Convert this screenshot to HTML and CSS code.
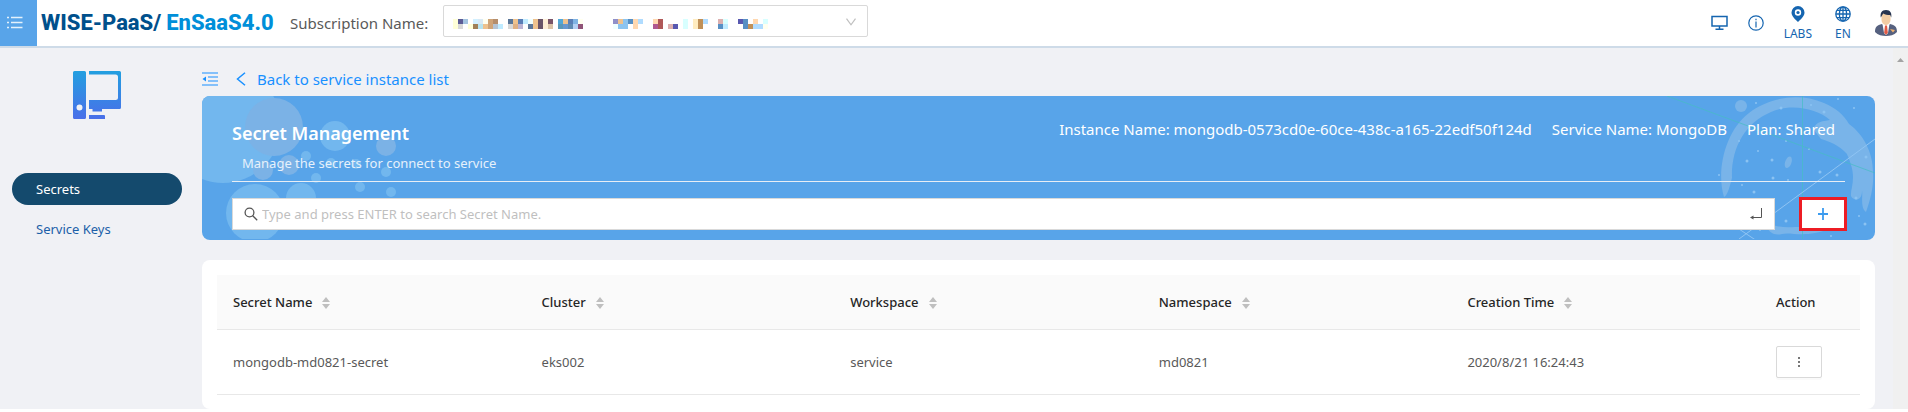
FILE: index.html
```html
<!DOCTYPE html>
<html lang="en">
<head>
<meta charset="utf-8">
<title>Secret Management</title>
<link rel="stylesheet" href="styles.css">
</head>
<body>
<header class="topbar">
  <button class="menu-toggle" type="button" aria-label="Menu">
    <svg width="16" height="14" viewBox="0 0 16 14" fill="none" stroke="#e4f1fc" stroke-width="1.3"><path d="M4 1.5h11.500M4 6.500h11.500M4 11.500h11.500M0 1.500h2M0 6.500h2M0 11.500h2"/></svg>
  </button>
  <div class="brand"><span class="brand-main">WISE-PaaS/</span><span class="brand-sub">EnSaaS4.0</span></div>
  <label class="sub-label" for="subscription">Subscription Name:</label>
  <div class="sub-field">
    <select id="subscription" class="sub-select"><option></option></select>
    <svg class="sub-mosaic" width="315" height="10" viewBox="0 0 63 2" shape-rendering="crispEdges">
      <path fill="#ffffd8" d="M0 0h1v2h-1zM3 1h1v1h-1z"/><path fill="#fffff0" d="M6 0h1v1h-1zM25 0h1v1h-1zM62 1h1v1h-1z"/>
      <path fill="#5b5b95" d="M1 0h1v1h-1z"/><path fill="#a4c4e0" d="M2 0h1v1h-1z"/><path fill="#d2f0ff" d="M4 0h1v1h-1z"/><path fill="#d9e9f5" d="M5 0h1v1h-1z"/>
      <path fill="#cfa478" d="M7 0h1v2h-1z"/><path fill="#b58e6c" d="M8 0h1v1h-1z"/><path fill="#d8d8d8" d="M1 1h1v1h-1zM11 1h1v1h-1z"/>
      <path fill="#a08058" d="M4 1h1v1h-1z"/><path fill="#b8e4f0" d="M5 1h1v1h-1z"/><path fill="#b4c4d4" d="M8 1h1v1h-1z"/>
      <path fill="#c0ebff" d="M9 1h1v1h-1zM14 0h1v1h-1zM54 1h1v1h-1z"/>
      <path fill="#eec28e" d="M6 1h1v1h-1zM12 0h1v1h-1zM16 0h1v2h-1zM22 0h1v1h-1zM33 0h1v1h-1z"/>
      <path fill="#5a7699" d="M11 0h1v1h-1zM15 1h1v1h-1z"/><path fill="#5a7eb6" d="M13 0h1v1h-1zM23 0h1v1h-1z"/>
      <path fill="#dfb083" d="M12 1h1v1h-1z"/><path fill="#bcb4d4" d="M13 1h1v1h-1z"/><path fill="#f0ffff" d="M15 0h1v1h-1zM32 1h1v1h-1z"/>
      <path fill="#6a5468" d="M17 0h1v2h-1z"/><path fill="#7a5468" d="M19 0h1v1h-1z"/><path fill="#ffeed6" d="M18 0h1v2h-1z"/><path fill="#dcc4a8" d="M19 1h1v1h-1z"/>
      <path fill="#52a8d8" d="M21 0h1v1h-1z"/><path fill="#5a98b8" d="M21 1h1v1h-1z"/><path fill="#6898d0" d="M22 1h2v1h-2z"/><path fill="#80b4e4" d="M24 0h1v1h-1z"/><path fill="#5f8bb3" d="M23 1h1v1h-1z"/><path fill="#b4d0f4" d="M24 1h1v1h-1z"/><path fill="#905478" d="M25 1h1v1h-1z"/>
      <path fill="#9090c8" d="M32 0h1v1h-1z"/><path fill="#8cc4f0" d="M34 0h1v2h-2v-1h1z"/><path fill="#5890c4" d="M35 0h1v1h-1zM53 1h1v1h-1zM58 0h1v2h-1z"/>
      <path fill="#ffd8b0" d="M36 0h1v2h-1zM40 0h1v1h-1zM60 0h1v1h-1z"/><path fill="#b0dcff" d="M37 0h1v1h-1zM50 0h1v1h-1zM60 1h2v1h-2z"/>
      <path fill="#b05858" d="M41 0h1v2h-1z"/><path fill="#b05890" d="M40 1h1v1h-1z"/><path fill="#dcb0b0" d="M43 1h1v1h-1zM53 0h1v1h-1z"/><path fill="#5858b0" d="M44 1h1v1h-1zM57 0h1v1h-1z"/>
      <path fill="#d8ffff" d="M46 0h1v2h-1zM54 0h1v1h-1zM62 0h1v1h-1z"/><path fill="#ffecc0" d="M48 0h1v2h-1z"/><path fill="#c09058" d="M49 0h1v2h-1zM59 1h1v1h-1z"/>
    </svg>
    <svg class="sub-arrow" width="10" height="8" viewBox="0 0 10 8" fill="none" stroke="#bfbfbf" stroke-width="1.200"><path d="M.5 .7L5 6.800L9.500 .7"/></svg>
  </div>
  <nav class="tools" aria-label="Tools">
    <button type="button" class="tool" aria-label="Console"><svg width="17" height="16" viewBox="0 0 17 16" fill="none" stroke="#1565b0" stroke-width="1.500"><path d="M1 1.500h15v9.500h-15zM8.500 11v3M4.500 14.200h8"/></svg></button>
    <button type="button" class="tool" aria-label="Information"><svg width="16" height="16" viewBox="0 0 16 16" fill="none" stroke="#1565b0" stroke-width="1.200"><circle cx="8" cy="8" r="7.200"/><path d="M8 6.500v6M8 3.700v1.500"/></svg></button>
    <button type="button" class="tool tool-text"><svg width="16" height="16" viewBox="0 0 16 16"><path fill="#1565b0" fill-rule="evenodd" d="M8 0a6.500 6.500 0 0 1 6.500 6.500c0 4-4 7-6.500 9.500C5.500 13.500 1.500 10.500 1.500 6.500A6.500 6.500 0 0 1 8 0zM8 3.300a3.200 3.200 0 1 0 0 6.400a3.200 3.200 0 0 0 0-6.400z"/><circle cx="8" cy="6.500" r="1.600" fill="#1565b0"/></svg><span>LABS</span></button>
    <button type="button" class="tool tool-text"><svg width="16" height="16" viewBox="0 0 16 16" fill="none" stroke="#1565b0" stroke-width="1.300"><circle cx="8" cy="8" r="7.200"/><ellipse cx="8" cy="8" rx="3.600" ry="7.200"/><path d="M8 1v14M1 8h14M2 4.300h12M2 11.700h12"/></svg><span>EN</span></button>
    <button type="button" class="tool" aria-label="Account"><svg width="24" height="28" viewBox="0 0 24 28"><path fill="#56617f" d="M1 23c0-5 2-7 7-8l4 3 4-3c5 1 7 3 7 8-3 3-7 4-11 4s-8-1-11-4z"/><path fill="#fff" d="M8.500 15h7l-1.500 9-2 2-2-2z"/><path fill="#e25b45" d="M11 16.500h2l.8 7-1.800 2.500-1.800-2.500z"/><path fill="#f2cda4" d="M7.500 7c0-3 2-4.500 4.500-4.500s4.500 1.500 4.500 4.500v3.500c0 3-2 5.500-4.500 5.500s-4.500-2.500-4.500-5.500z"/><path fill="#26344f" d="M6.800 8.500c-.8-4 .7-7.500 5.200-7.500s6 3.500 5.200 7.500l-1-2.500c-3 0-5-.5-7-1.500z"/><path fill="#f2b16c" d="M16 20l5 1-2 2.500z"/></svg></button>
  </nav>
</header>

<div class="layout">
  <aside class="sidebar">
    <svg class="service-icon" width="48" height="48" viewBox="0 0 48 48">
      <defs><linearGradient id="pc" x1="0" y1="0" x2="0" y2="48" gradientUnits="userSpaceOnUse"><stop offset="0" stop-color="#229fe0"/><stop offset="1" stop-color="#4a6fe9"/></linearGradient></defs>
      <path fill="url(#pc)" fill-rule="evenodd" d="M1.500 0h10a1.500 1.500 0 0 1 1.500 1.500v45a1.500 1.500 0 0 1-1.500 1.500h-10a1.500 1.500 0 0 1-1.500-1.500v-45a1.500 1.500 0 0 1 1.500-1.500zM6.500 33.500a3 3 0 1 0 0 6a3 3 0 0 0 0-6zM16 0h30.500a1.500 1.500 0 0 1 1.500 1.500v35a1.500 1.500 0 0 1-1.500 1.500h-17.500v2.500h-9.500v-2.500h-3.500v-9h26.500a2.500 2.500 0 0 0 2.500-2.500v-20.500a2.500 2.500 0 0 0-2.500-2.500h-26.500zM16 44h15a1 1 0 0 1 1 1v3h-16z"/>
    </svg>
    <nav class="side-nav" aria-label="Service">
      <a class="side-link side-link-active" href="#secrets">Secrets</a>
      <a class="side-link" href="#keys">Service Keys</a>
    </nav>
  </aside>

  <main class="content">
    <div class="crumbs">
      <button class="fold" type="button" aria-label="Collapse sidebar"><svg width="16" height="14" viewBox="0 0 16 14" fill="none" stroke="#1890ff" stroke-width="1.200"><path d="M0 1h16M6 5h10M6 9h10M0 13h16"/><path d="M4 4.500v5l-3.500-2.500z" fill="#1890ff" stroke="none"/></svg></button>
      <a class="back" href="#instances"><svg width="10" height="14" viewBox="0 0 10 14" fill="none" stroke="#1890ff" stroke-width="1.500"><path d="M9 .7L1.500 7L9 13.300"/></svg>Back to service instance list</a>
    </div>

    <section class="banner">
      <svg class="art art-left" width="210" height="143" viewBox="0 0 210 143">
        <g fill="#72b7ee"><circle cx="21" cy="29" r="58"/><circle cx="53" cy="117" r="29"/><circle cx="133" cy="40" r="15"/><circle cx="99" cy="102" r="15"/><circle cx="104" cy="60" r="5"/><circle cx="129" cy="67" r="5"/><circle cx="114" cy="82" r="5"/><circle cx="184" cy="76" r="5"/><circle cx="158" cy="91" r="5"/><circle cx="189" cy="96" r="5"/><circle cx="154" cy="68" r="5"/></g>
        <g fill="#7bb2e6"><circle cx="72" cy="31" r="29"/><circle cx="184" cy="50" r="10"/><circle cx="87" cy="69" r="10"/><circle cx="61" cy="74" r="10"/></g>
      </svg>
      <svg class="art art-right" width="208" height="143" viewBox="0 0 208 143">
        <g fill="#79b4e9">
          <path d="M57 101C49 75 58 35 82 17C101 2 131-4 157 7C169 12 177 19 182 28C196 38 206 56 206 76C207 89 204 102 199 116C193 112 196 98 195 95C195 106 186 105 184 100C183 94 189 84 184 69C178 46 162 34 147 31C163 36 174 42 181 59C171 48 163 46 154 43L146 33C151 24 155 26 163 24C150 12 123 7 104 16C78 27 64 52 65 82C63 89 61 99 57 101z"/>
          <path d="M98 123c5 7 16 9 30 8c19 0 37-2 51-12c-8 10-18 16-31 18c-16 3-26-1-33 1c-8 2-13-2-15-7z"/>
          <path d="M121 61c5-3 5 6 1 10c-5 4-6-5-1-10z"/>
          <circle cx="74" cy="10" r="6"/>
        </g>
        <g fill="#8bc3f2"><circle cx="89" cy="7" r="1"/><circle cx="114" cy="12" r="1.500"/><circle cx="144" cy="9" r="1"/><circle cx="157" cy="16" r="1.500"/><circle cx="171" cy="3" r="1"/><circle cx="187" cy="12" r="1"/><circle cx="80" cy="65" r="1.500"/><circle cx="72" cy="45" r="1"/><circle cx="91" cy="55" r="1"/><circle cx="105" cy="64" r="1.500"/><circle cx="119" cy="45" r="1"/><circle cx="153" cy="76" r="1.500"/><circle cx="170" cy="79" r="1.500"/><circle cx="142" cy="53" r="1"/><circle cx="75" cy="89" r="1"/><circle cx="87" cy="96" r="1.500"/><circle cx="106" cy="82" r="1.500"/><circle cx="121" cy="84" r="1"/><circle cx="52" cy="79" r="1"/><circle cx="199" cy="61" r="1.500"/><circle cx="189" cy="102" r="1.500"/><circle cx="192" cy="120" r="1"/><circle cx="198" cy="128" r="1.500"/><circle cx="119" cy="125" r="1.500"/><circle cx="164" cy="140" r="1"/><circle cx="93" cy="134" r="1"/></g>
        <g fill="none"><path stroke="#46bdc3" stroke-opacity=".7" d="M0 0L208 77M135.500 0v143"/><path stroke="#8fc4f3" d="M208 43L72 143M72 133l18 12"/></g>
      </svg>
      <div class="banner-head">
        <h1 class="banner-title">Secret Management</h1>
        <div class="facts"><span>Instance Name: mongodb-0573cd0e-60ce-438c-a165-22edf50f124d</span><span>Service Name: MongoDB</span><span>Plan: Shared</span></div>
      </div>
      <p class="banner-note">Manage the secrets for connect to service</p>
      <div class="search-row">
        <label class="search">
          <svg width="14" height="14" viewBox="0 0 14 14" fill="none" stroke="#555" stroke-width="1.300"><circle cx="5.500" cy="5.500" r="4.400"/><path d="M8.700 8.700L13.200 13.200"/></svg>
          <input class="search-input" type="text" aria-label="Search Secret Name" placeholder="Type and press ENTER to search Secret Name.">
          <svg width="12" height="12" viewBox="0 0 12 12" fill="none" stroke="#555"><path d="M11.500 0v9.500h-10"/><path d="M3.500 7.500v4l-3.500-2z" fill="#555" stroke="none"/></svg>
        </label>
        <button class="add" type="button" aria-label="Add secret"><svg width="12" height="12" viewBox="0 0 12 12" stroke="#3b9bef" stroke-width="1.800"><path d="M6 0v12M1 6h10"/></svg></button>
      </div>
    </section>

    <section class="card">
      <table class="secrets">
        <thead><tr>
          <th>Secret Name<svg class="sort" width="8" height="12" viewBox="0 0 8 12"><path fill="#bfbfbf" d="M4 0l4 5h-8zM4 12l4-5h-8z"/></svg></th>
          <th>Cluster<svg class="sort" width="8" height="12" viewBox="0 0 8 12"><path fill="#bfbfbf" d="M4 0l4 5h-8zM4 12l4-5h-8z"/></svg></th>
          <th>Workspace<svg class="sort" width="8" height="12" viewBox="0 0 8 12"><path fill="#bfbfbf" d="M4 0l4 5h-8zM4 12l4-5h-8z"/></svg></th>
          <th>Namespace<svg class="sort" width="8" height="12" viewBox="0 0 8 12"><path fill="#bfbfbf" d="M4 0l4 5h-8zM4 12l4-5h-8z"/></svg></th>
          <th>Creation Time<svg class="sort" width="8" height="12" viewBox="0 0 8 12"><path fill="#bfbfbf" d="M4 0l4 5h-8zM4 12l4-5h-8z"/></svg></th>
          <th class="col-action">Action</th>
        </tr></thead>
        <tbody><tr>
          <td>mongodb-md0821-secret</td><td>eks002</td><td>service</td><td>md0821</td><td>2020/8/21 16:24:43</td>
          <td><button class="more" type="button" aria-label="More actions"><svg width="4" height="12" viewBox="0 0 4 12" fill="#777"><path d="M1 1h2v2h-2zM1 5h2v2h-2zM1 9h2v2h-2z"/></svg></button></td>
        </tr></tbody>
      </table>
    </section>
  </main>
  <div class="scroll-track"><svg width="7" height="4" viewBox="0 0 7 4"><path fill="#a3a3a3" d="M3.500 0L7 4h-7z"/></svg></div>
</div>
</body>
</html>
```

FILE: styles.css
```css
* { box-sizing: border-box; }
body {
  margin: 0;
  background: #fff;
  color: #595959;
  font: 13px/20px "Noto Sans", "Open Sans", sans-serif;
}
button { padding: 0; border: 0; background: none; font: inherit; cursor: pointer; }
a { text-decoration: none; }
svg { display: block; flex: none; }

.topbar {
  display: flex;
  align-items: center;
  height: 48px;
  border-bottom: 2px solid #cedbe8;
  background: #fff;
}
.menu-toggle { display: flex; flex: none; align-items: center; align-self: stretch; width: 37px; padding-left: 7px; background: #58a4e9; }
.brand {
  display: flex;
  flex: none;
  gap: 5px;
  width: 253px;
  padding-left: 4px;
  font: 800 22px/40px Roboto, "Liberation Sans", sans-serif;
  white-space: nowrap;
}
.brand-main { color: #00508c; }
.brand-sub { color: #008fd9; }
.sub-label { margin-right: 15px; font-size: 15px; white-space: nowrap; }
.sub-field { position: relative; flex: 0 1 425px; margin-bottom: 4px; }
.sub-select {
  display: block;
  width: 100%;
  height: 32px;
  border: 1px solid #d9d9d9;
  border-radius: 2px;
  background: #fff;
  appearance: none;
}
.sub-mosaic { position: absolute; left: 10px; top: 14px; pointer-events: none; }
.sub-arrow { position: absolute; right: 12px; top: 13px; pointer-events: none; }
.tools { display: flex; align-items: center; gap: 20px; margin-left: auto; padding-right: 10px; }
.tool { color: #1565b0; }
.tool-text { display: flex; flex-direction: column; align-items: center; gap: 2px; min-width: 22px; padding-top: 4px; font-size: 12px; }

.layout { display: flex; background: #f0f1f5; }
.sidebar { flex: none; width: 202px; padding: 23px 20px 0 12px; }
.service-icon { margin: 0 auto 54px 61px; }
.side-nav { display: flex; flex-direction: column; gap: 8px; }
.side-link { padding: 0 24px; border-radius: 16px; color: #1c5fa8; line-height: 32px; }
.side-link-active { background: #144a6d; color: #fff; }

.content { flex: 1; min-width: 0; padding-right: 18px; }
.crumbs { display: flex; align-items: center; gap: 18px; height: 48px; padding-top: 14px; }
.back { display: flex; align-items: center; gap: 11px; color: #1890ff; font-size: 15px; }

.banner {
  position: relative;
  overflow: hidden;
  padding: 22px 30px 9px;
  border-radius: 8px;
  background: #58a4e9;
  color: #fff;
}
.art { position: absolute; top: 0; }
.art-left { left: 0; }
.art-right { right: 0; }
.banner-head, .banner-note, .search-row { position: relative; }
.banner-head { display: flex; justify-content: space-between; }
.banner-title { margin: 0; font-size: 18px; line-height: 30px; font-weight: 600; }
.facts { display: flex; gap: 20px; padding-right: 10px; font-size: 15px; line-height: 22px; }
.banner-note {
  margin: 0;
  padding: 5px 10px 8px;
  border-bottom: 1px solid #e8eef5;
  color: #e6f1fb;
}
.search-row { display: flex; align-items: center; gap: 24px; margin-top: 15px; margin-right: -2px; }
.search {
  display: flex;
  flex: 1;
  align-items: center;
  gap: 4px;
  height: 32px;
  padding: 0 12px 0 11px;
  border: 1px solid #d9d9d9;
  background: #fff;
}
.search-input { flex: 1; min-width: 0; padding: 0; border: 0; outline: 0; font: inherit; }
.search-input::placeholder { color: #bfbfbf; opacity: 1; }
.add { display: flex; align-items: center; justify-content: center; width: 48px; height: 34px; border: 3px solid #ed1c24; background: #fff; }

.card { margin-top: 20px; padding: 15px 15px 14px; border-radius: 8px; background: #fff; }
.secrets { width: 100%; border-collapse: collapse; table-layout: fixed; }
.secrets th, .secrets td { padding: 0 16px; border-bottom: 1px solid #e8e8e8; text-align: left; white-space: nowrap; }
.secrets th { height: 54px; background: #fafafa; color: #262626; font-weight: 500; }
.secrets td { height: 65px; }
.secrets .col-action { width: 100px; }
.sort { display: inline-block; margin-left: 10px; vertical-align: -2px; }
.more { display: flex; align-items: center; justify-content: center; width: 46px; height: 32px; border: 1px solid #d9d9d9; border-radius: 2px; background: #fff; box-shadow: 0 2px 0 rgba(0, 0, 0, .02); }

.scroll-track { display: flex; justify-content: center; flex: none; width: 15px; padding-top: 10px; background: #f0f0f0; }
```
